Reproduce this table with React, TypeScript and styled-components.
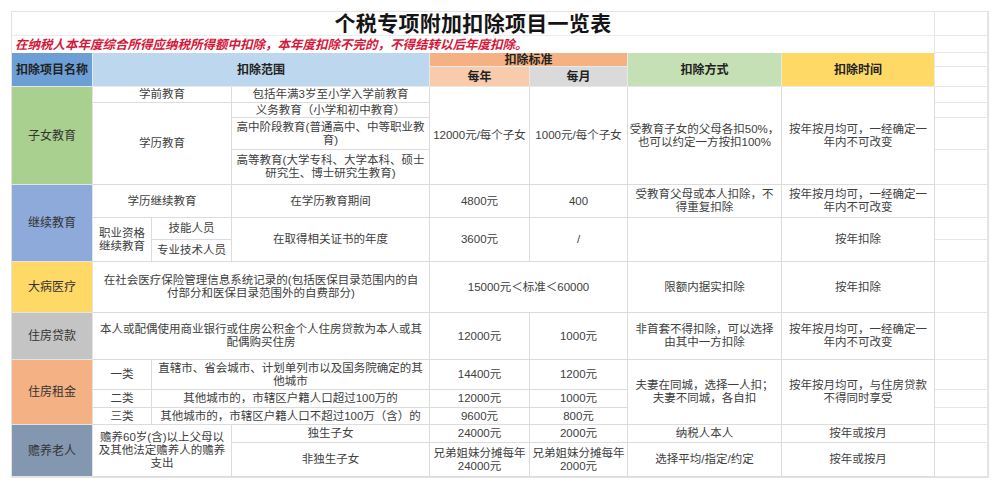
import React from "react";
import styled, { createGlobalStyle } from "styled-components";

const Global = createGlobalStyle`
  html, body { margin: 0; padding: 0; background: #ffffff; }
  body { font-family: "Liberation Sans", "Noto Sans CJK SC", sans-serif; }
`;

const Page = styled.div`
  box-sizing: border-box;
  width: 1000px;
  height: 489px;
  padding: 12px 0 0 12px;
  background: #fff;
`;

const Sheet = styled.div`
  display: grid;
  grid-template-columns: 81px 59px 80px 198px 100px 98px 154px 153px 53px;
  grid-template-rows: 24px 17px 14px 20px 16px 15px 32px 35px 33px 22px 22px 51px 47px 30px 18px 17px 18px 34px;
  width: 976px;
  box-shadow: 0 0 0 1px #e3e3e3, 0 0 3px rgba(0, 0, 0, 0.05);
`;

type Place = { $c: string; $r: string };

const Base = styled.div<Place>`
  grid-column: ${(p) => p.$c};
  grid-row: ${(p) => p.$r};
  box-sizing: border-box;
  display: flex;
  align-items: center;
  justify-content: center;
  text-align: center;
  white-space: nowrap;
  font-family: "Liberation Sans", "Noto Sans CJK SC", sans-serif;
  border-right: 1px solid #dcdcdc;
  border-bottom: 1px solid #dcdcdc;
  min-width: 0;
  min-height: 0;
`;

const Title = styled(Base)`
  font-size: 21px;
  line-height: 24px;
  font-weight: 700;
  color: #151515;
  letter-spacing: 0.3px;
  border-bottom-color: #ececec;
  border-right-color: #e6e6e6;
`;

const Note = styled(Base)`
  justify-content: flex-start;
  padding-left: 3px;
  font-size: 12.5px;
  line-height: 16px;
  font-weight: 700;
  font-style: italic;
  color: #d4173a;
  border-right-color: #e6e6e6;
  border-bottom: none;
`;

const Head = styled(Base)<{ $bg: string }>`
  background: ${(p) => p.$bg};
  font-size: 12px;
  line-height: 14px;
  font-weight: 700;
  color: #222;
  border-color: #e8e8e8;
`;

const Category = styled(Base)<{ $bg: string }>`
  background: ${(p) => p.$bg};
  font-size: 12px;
  line-height: 14px;
  color: #333;
  border-color: #e4e4e4;
`;

const Cell = styled(Base)`
  font-size: 11.5px;
  line-height: 13px;
  color: #404040;
  background: #fff;
`;

const Spare = styled(Base)`
  border-color: #e6e6e6;
`;

const C = {
  headName: "#6c9fd6",
  headRange: "#bdd7ee",
  headStd: "#f4b183",
  headYear: "#f8cbad",
  headMonth: "#dadada",
  headWay: "#c5e0b4",
  headTime: "#ffd966",
  child: "#a9d08e",
  cont: "#8eaadb",
  ill: "#ffd966",
  loan: "#c4c4c4",
  rent: "#f4b183",
  elder: "#8497b0",
};

export default function App() {
  const spareRows = Array.from({ length: 18 }, (_, i) => i + 1);
  return (
    <Page>
      <Global />
      <Sheet>
        <Title $c="1 / 9" $r="1">个税专项附加扣除项目一览表</Title>
        <Note $c="1 / 9" $r="2">
          在纳税人本年度综合所得应纳税所得额中扣除，本年度扣除不完的，不得结转以后年度扣除。
        </Note>

        {/* header */}
        <Head $c="1" $r="3 / 5" $bg={C.headName}>扣除项目名称</Head>
        <Head $c="2 / 5" $r="3 / 5" $bg={C.headRange}>扣除范围</Head>
        <Head $c="5 / 7" $r="3" $bg={C.headStd}>扣除标准</Head>
        <Head $c="5" $r="4" $bg={C.headYear}>每年</Head>
        <Head $c="6" $r="4" $bg={C.headMonth}>每月</Head>
        <Head $c="7" $r="3 / 5" $bg={C.headWay}>扣除方式</Head>
        <Head $c="8" $r="3 / 5" $bg={C.headTime}>扣除时间</Head>

        {/* 子女教育 */}
        <Category $c="1" $r="5 / 9" $bg={C.child}>子女教育</Category>
        <Cell $c="2 / 4" $r="5">学前教育</Cell>
        <Cell $c="2 / 4" $r="6 / 9">学历教育</Cell>
        <Cell $c="4" $r="5">包括年满3岁至小学入学前教育</Cell>
        <Cell $c="4" $r="6">义务教育（小学和初中教育）</Cell>
        <Cell $c="4" $r="7">
          高中阶段教育(普通高中、中等职业教
          <br />
          育)
        </Cell>
        <Cell $c="4" $r="8">
          高等教育(大学专科、大学本科、硕士
          <br />
          研究生、博士研究生教育)
        </Cell>
        <Cell $c="5" $r="5 / 9">12000元/每个子女</Cell>
        <Cell $c="6" $r="5 / 9">1000元/每个子女</Cell>
        <Cell $c="7" $r="5 / 9">
          受教育子女的父母各扣50%，
          <br />
          也可以约定一方按扣100%
        </Cell>
        <Cell $c="8" $r="5 / 9">
          按年按月均可，一经确定一
          <br />
          年内不可改变
        </Cell>

        {/* 继续教育 */}
        <Category $c="1" $r="9 / 12" $bg={C.cont}>继续教育</Category>
        <Cell $c="2 / 4" $r="9">学历继续教育</Cell>
        <Cell $c="4" $r="9">在学历教育期间</Cell>
        <Cell $c="5" $r="9">4800元</Cell>
        <Cell $c="6" $r="9">400</Cell>
        <Cell $c="7" $r="9">
          受教育父母或本人扣除，不
          <br />
          得重复扣除
        </Cell>
        <Cell $c="8" $r="9">
          按年按月均可，一经确定一
          <br />
          年内不可改变
        </Cell>
        <Cell $c="2" $r="10 / 12">
          职业资格
          <br />
          继续教育
        </Cell>
        <Cell $c="3" $r="10">技能人员</Cell>
        <Cell $c="3" $r="11">专业技术人员</Cell>
        <Cell $c="4" $r="10 / 12">在取得相关证书的年度</Cell>
        <Cell $c="5" $r="10 / 12">3600元</Cell>
        <Cell $c="6" $r="10 / 12">/</Cell>
        <Cell $c="7" $r="10 / 12" />
        <Cell $c="8" $r="10 / 12">按年扣除</Cell>

        {/* 大病医疗 */}
        <Category $c="1" $r="12" $bg={C.ill}>大病医疗</Category>
        <Cell $c="2 / 5" $r="12">
          在社会医疗保险管理信息系统记录的(包括医保目录范围内的自
          <br />
          付部分和医保目录范围外的自费部分)
        </Cell>
        <Cell $c="5 / 7" $r="12">15000元＜标准＜60000</Cell>
        <Cell $c="7" $r="12">限额内据实扣除</Cell>
        <Cell $c="8" $r="12">按年扣除</Cell>

        {/* 住房贷款 */}
        <Category $c="1" $r="13" $bg={C.loan}>住房贷款</Category>
        <Cell $c="2 / 5" $r="13">
          本人或配偶使用商业银行或住房公积金个人住房贷款为本人或其
          <br />
          配偶购买住房
        </Cell>
        <Cell $c="5" $r="13">12000元</Cell>
        <Cell $c="6" $r="13">1000元</Cell>
        <Cell $c="7" $r="13">
          非首套不得扣除，可以选择
          <br />
          由其中一方扣除
        </Cell>
        <Cell $c="8" $r="13">
          按年按月均可，一经确定一
          <br />
          年内不可改变
        </Cell>

        {/* 住房租金 */}
        <Category $c="1" $r="14 / 17" $bg={C.rent}>住房租金</Category>
        <Cell $c="2" $r="14">一类</Cell>
        <Cell $c="3 / 5" $r="14">
          直辖市、省会城市、计划单列市以及国务院确定的其
          <br />
          他城市
        </Cell>
        <Cell $c="5" $r="14">14400元</Cell>
        <Cell $c="6" $r="14">1200元</Cell>
        <Cell $c="2" $r="15">二类</Cell>
        <Cell $c="3 / 5" $r="15">其他城市的，市辖区户籍人口超过100万的</Cell>
        <Cell $c="5" $r="15">12000元</Cell>
        <Cell $c="6" $r="15">1000元</Cell>
        <Cell $c="2" $r="16">三类</Cell>
        <Cell $c="3 / 5" $r="16">其他城市的，市辖区户籍人口不超过100万（含）的</Cell>
        <Cell $c="5" $r="16">9600元</Cell>
        <Cell $c="6" $r="16">800元</Cell>
        <Cell $c="7" $r="14 / 17">
          夫妻在同城，选择一人扣；
          <br />
          夫妻不同城，各自扣
        </Cell>
        <Cell $c="8" $r="14 / 17">
          按年按月均可，与住房贷款
          <br />
          不得同时享受
        </Cell>

        {/* 赡养老人 */}
        <Category $c="1" $r="17 / 19" $bg={C.elder}>赡养老人</Category>
        <Cell $c="2 / 4" $r="17 / 19">
          赡养60岁(含)以上父母以
          <br />
          及其他法定赡养人的赡养
          <br />
          支出
        </Cell>
        <Cell $c="4" $r="17">独生子女</Cell>
        <Cell $c="5" $r="17">24000元</Cell>
        <Cell $c="6" $r="17">2000元</Cell>
        <Cell $c="7" $r="17">纳税人本人</Cell>
        <Cell $c="8" $r="17">按年或按月</Cell>
        <Cell $c="4" $r="18">非独生子女</Cell>
        <Cell $c="5" $r="18">
          兄弟姐妹分摊每年
          <br />
          24000元
        </Cell>
        <Cell $c="6" $r="18">
          兄弟姐妹分摊每年
          <br />
          2000元
        </Cell>
        <Cell $c="7" $r="18">选择平均/指定/约定</Cell>
        <Cell $c="8" $r="18">按年或按月</Cell>

        {spareRows.map((r) => (
          <Spare key={r} $c="9" $r={String(r)} />
        ))}
      </Sheet>
    </Page>
  );
}
